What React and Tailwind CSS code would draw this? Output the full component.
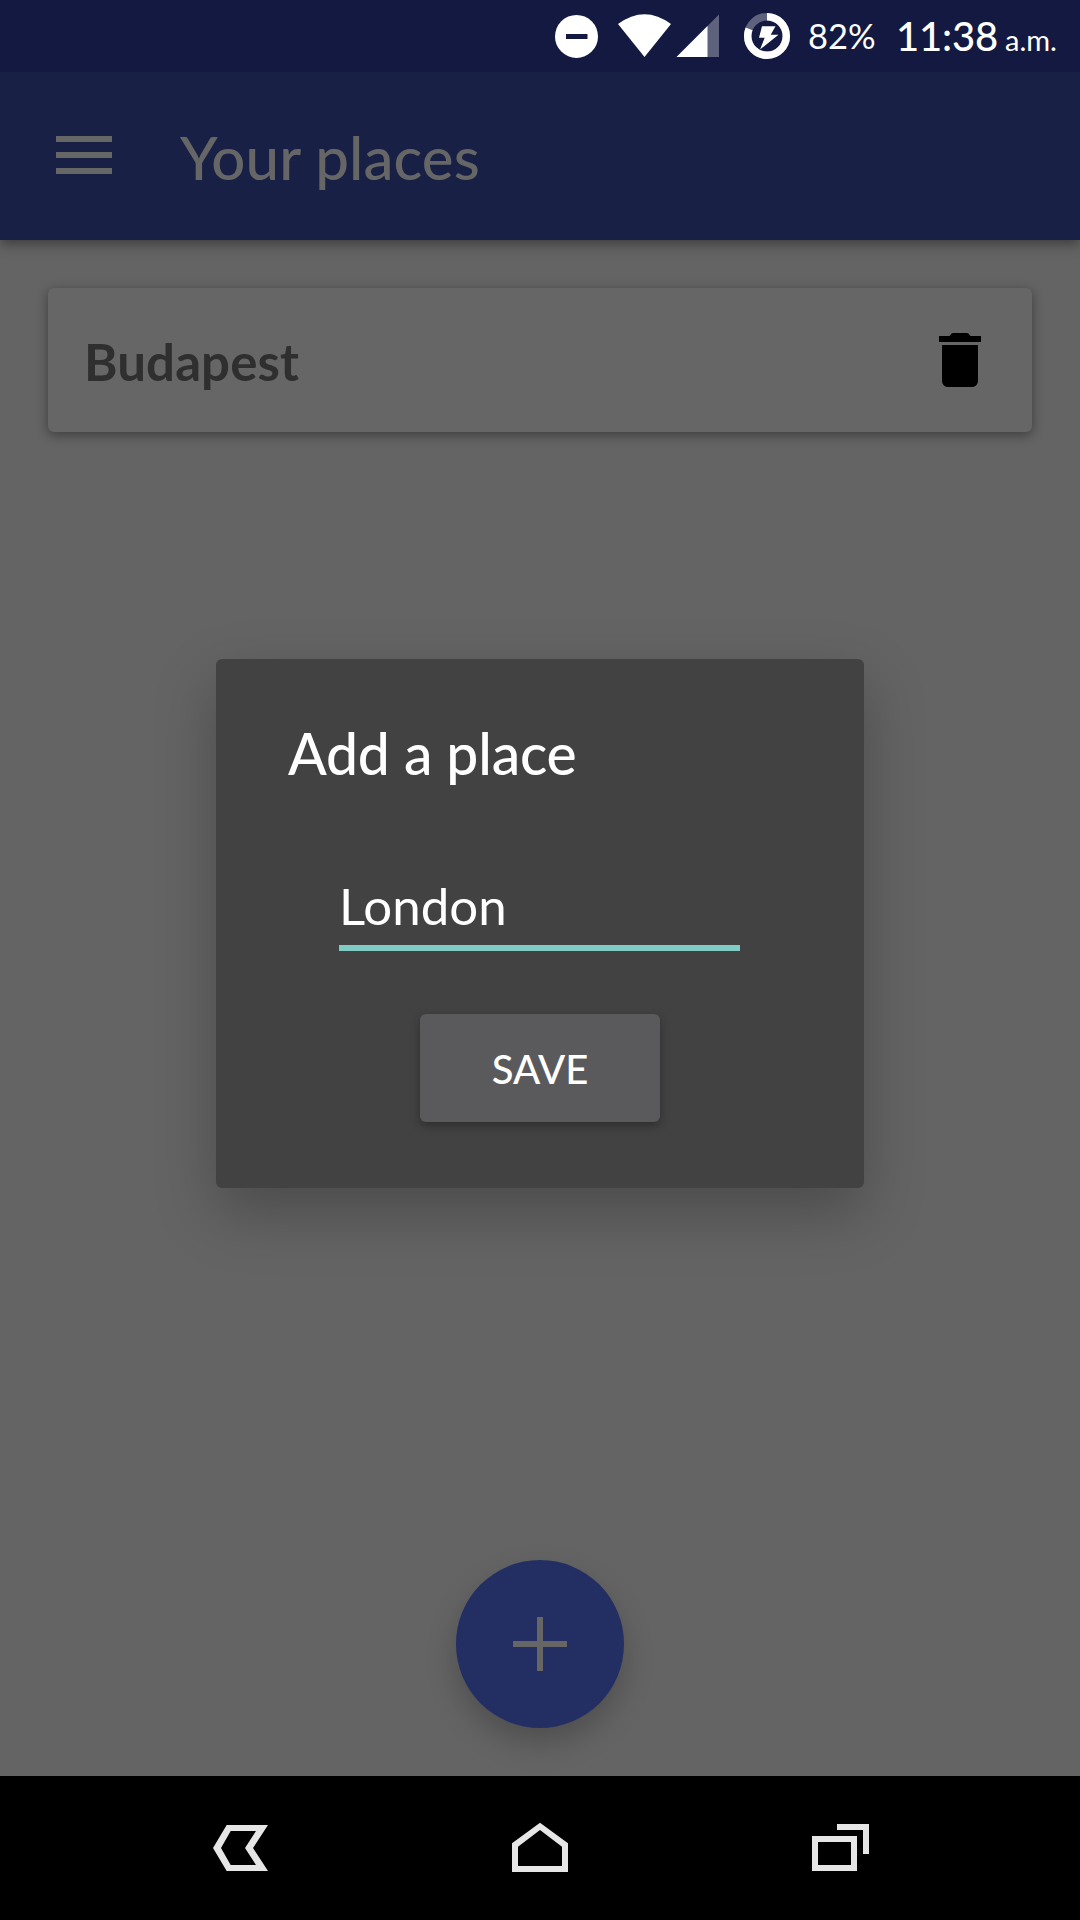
function StatusBar() {
  return (
    <div className="relative z-20 flex h-[72px] shrink-0 items-center bg-[#131940] text-white">
      <svg className="ml-[540px] h-[72px] w-[268px] shrink-0" viewBox="540 0 268 72" fill="currentColor">
        <circle cx="576.5" cy="36.4" r="21.5" />
        <rect x="566" y="34" width="21.5" height="5" fill="#131940" />
        <path d="M618 24Q644.5 4.500 671 24L644.500 57Z" />
        <path d="M719 14.500V57H676.500Z" opacity="0.32" />
        <path d="M707.500 26V57H676.500Z" />
        <circle cx="767" cy="36" r="19.300" fill="none" stroke="#fff" strokeOpacity="0.32" strokeWidth="7.500" />
        <circle cx="767" cy="36" r="19.300" fill="none" stroke="#fff" strokeWidth="7.500" pathLength="100" strokeDasharray="81 100" transform="rotate(-90 767 36)" />
        <path d="M762 26.300H775.500L770.700 34.700H778.500L760 49.500L764.700 37.700H759Z" />
      </svg>
      <span className="w-[88px] text-[34.5px] leading-[72px]">82%</span>
      <span className="flex items-baseline pt-[3px] leading-[72px]">
        <span className="w-[109px] text-[40px] font-medium tracking-[-0.2px]">11:38</span>
        <span className="text-[29px]">a.m.</span>
      </span>
    </div>
  );
}

function Toolbar() {
  return (
    <header className="relative z-10 flex h-[168px] shrink-0 items-center bg-[#192046] pl-[56px] text-[#666] shadow-[0_4px_12px_rgba(0,0,0,0.4)]">
      <div className="mr-[68px] mb-[2px] flex w-[56px] flex-col gap-[10px]">
        <div className="h-[6px] bg-[#666]" />
        <div className="h-[6px] bg-[#666]" />
        <div className="h-[6px] bg-[#666]" />
      </div>
      <h1 className="pt-px text-[60px] leading-none font-medium tracking-[0.1px]">Your places</h1>
    </header>
  );
}

function PlaceCard() {
  return (
    <div className="mx-12 mt-12 flex h-[144px] shrink-0 items-center justify-between rounded-[6px] bg-[#666] pr-9 pl-9 shadow-[0_3px_12px_rgba(0,0,0,0.4)]">
      <span className="pt-[3px] text-[51px] leading-none font-bold tracking-[0.1px] text-[#2f2f2f]">Budapest</span>
      <svg className="h-[72px] w-[72px]" viewBox="0 0 24 24" fill="#000">
        <path d="M6 19c0 1.100.9 2 2 2h8c1.100 0 2-.9 2-2V7H6v12zM19 4h-3.500l-.7-.8q-.2-.2-.5-.2h-4.600q-.3 0-.5.2L8.500 4H5v2h14V4z" />
      </svg>
    </div>
  );
}

function AddButton() {
  return (
    <button className="mt-auto mb-12 flex h-[168px] w-[168px] shrink-0 items-center justify-center self-center rounded-full bg-[#232f63] shadow-[0_14px_30px_rgba(0,0,0,0.22)]">
      <svg className="h-[54px] w-[54px]" viewBox="0 0 54 54" fill="#666">
        <path d="M24 0h6v24h24v6H30v24h-6V30H0v-6h24z" />
      </svg>
    </button>
  );
}

function AddPlaceDialog() {
  return (
    <div className="absolute top-[659px] left-[216px] z-20 flex h-[529px] w-[648px] flex-col rounded-[6px] bg-[#424242] text-white shadow-[0_24px_60px_rgba(0,0,0,0.25)]">
      <h2 className="mt-[58px] ml-[72px] text-[57px] leading-[72px] font-medium tracking-[-0.2px]">Add a place</h2>
      <div className="mt-[89px] ml-[123px] flex h-[73px] w-[401px] items-start border-b-[6px] border-[#80cbc4]">
        <span className="text-[51px] leading-[56px]">London</span>
      </div>
      <button className="mt-[63px] flex h-[108px] w-[240px] items-center justify-center self-center rounded-[6px] bg-[#5a5a5c] pt-px text-[40px] leading-none font-medium shadow-[0_4px_10px_rgba(0,0,0,0.3)]">
        SAVE
      </button>
    </div>
  );
}

function NavBar() {
  return (
    <nav className="relative z-10 flex h-[144px] shrink-0 items-center justify-between bg-black px-[204px] text-[#e6e6e6]">
      <svg className="h-[72px] w-[72px]" viewBox="204 1812 72 72" fill="currentColor" fillRule="evenodd">
        <path d="M213 1848L226.700 1825H268L253 1848L268 1871H226.700ZM221 1848L230.700 1865H256L245 1848L256 1831H230.700Z" />
      </svg>
      <svg className="h-[72px] w-[72px]" viewBox="504 1812 72 72" fill="currentColor" fillRule="evenodd">
        <path d="M540 1822.700L568 1843.300V1872H512V1843.300ZM540 1830L518 1846.700V1866H562V1846.700Z" />
      </svg>
      <svg className="h-[72px] w-[72px]" viewBox="804 1812 72 72" fill="currentColor" fillRule="evenodd">
        <path d="M812 1836H857V1871H812ZM818 1842V1865H851V1842ZM837 1824H869V1854H863V1830H837Z" />
      </svg>
    </nav>
  );
}

export default function App() {
  return (
    <div className="relative flex h-[1920px] w-[1080px] flex-col overflow-hidden bg-[#646464] font-['Lato',sans-serif]">
      <StatusBar />
      <Toolbar />
      <main className="flex min-h-0 flex-1 flex-col">
        <PlaceCard />
        <AddButton />
      </main>
      <AddPlaceDialog />
      <NavBar />
    </div>
  );
}
